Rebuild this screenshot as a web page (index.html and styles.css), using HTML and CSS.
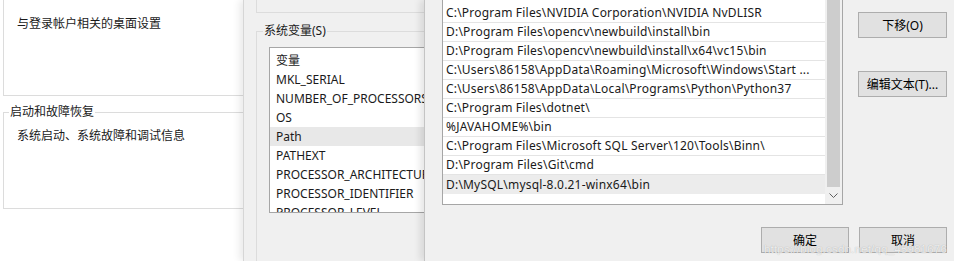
FILE: index.html
```html
<!DOCTYPE html>
<html lang="zh-CN">
<head>
    <meta charset="UTF-8">
    <title>编辑环境变量</title>
    <link rel="stylesheet" href="styles.css">
</head>
<body>

    <div class="desktop">

        <!-- 系统属性 / 高级 -->
        <section class="win win-advanced">
            <div class="group group-profile">
                <p class="group-text">与登录帐户相关的桌面设置</p>
            </div>
            <fieldset class="group group-startup">
                <legend>启动和故障恢复</legend>
                <p class="group-text">系统启动、系统故障和调试信息</p>
            </fieldset>
        </section>

        <!-- 环境变量 -->
        <section class="win win-env">
            <div class="env-user"></div>
            <fieldset class="env-system">
                <legend>系统变量(S)</legend>
                <div class="listbox var-list">
                    <div class="var-row">变量</div>
                    <div class="var-row">MKL_SERIAL</div>
                    <div class="var-row">NUMBER_OF_PROCESSORS</div>
                    <div class="var-row">OS</div>
                    <div class="var-row selected">Path</div>
                    <div class="var-row">PATHEXT</div>
                    <div class="var-row">PROCESSOR_ARCHITECTURE</div>
                    <div class="var-row">PROCESSOR_IDENTIFIER</div>
                    <div class="var-row">PROCESSOR_LEVEL</div>
                </div>
            </fieldset>
        </section>

        <!-- 编辑环境变量 -->
        <section class="win win-edit">
            <div class="edit-main">
                <div class="listbox path-list">
                    <ul class="path-items">
                        <li>C:\Program Files\NVIDIA Corporation\NVIDIA NvDLISR</li>
                        <li>D:\Program Files\opencv\newbuild\install\bin</li>
                        <li>D:\Program Files\opencv\newbuild\install\x64\vc15\bin</li>
                        <li>C:\Users\86158\AppData\Roaming\Microsoft\Windows\Start ...</li>
                        <li>C:\Users\86158\AppData\Local\Programs\Python\Python37</li>
                        <li>C:\Program Files\dotnet\</li>
                        <li>%JAVAHOME%\bin</li>
                        <li>C:\Program Files\Microsoft SQL Server\120\Tools\Binn\</li>
                        <li>D:\Program Files\Git\cmd</li>
                        <li class="selected">D:\MySQL\mysql-8.0.21-winx64\bin</li>
                    </ul>
                    <div class="scrollbar">
                        <div class="scroll-thumb"></div>
                        <div class="scroll-arrow">
                            <svg width="9" height="6" viewBox="0 0 9 6">
                                <polyline points="0.5,0.5 4.5,4.5 8.5,0.5" fill="none" stroke="#606060" stroke-width="1"/>
                            </svg>
                        </div>
                    </div>
                </div>
                <div class="side-buttons">
                    <button class="btn">下移(O)</button>
                    <button class="btn btn-edit">编辑文本(T)...</button>
                </div>
            </div>
            <div class="dialog-buttons">
                <button class="btn">确定</button>
                <button class="btn">取消</button>
            </div>
            <span class="watermark">https://blog.csdn.net/qq_45981676</span>
        </section>

    </div>

</body>
</html>
```

FILE: styles.css
```css
/* General */
body {
    margin: 0;
    font-family: "Noto Sans", "Noto Sans CJK SC", sans-serif;
    font-size: 12px;
    color: #1a1a1a;
    background: #f0f0f0;
}

.desktop {
    display: flex;
    height: 261px;
    overflow: hidden;
}

/* Windows */
.win {
    position: relative;
    height: 261px;
    box-sizing: border-box;
    overflow: hidden;
}

.win-advanced {
    width: 243px;
    flex-shrink: 0;
    padding-left: 3px;
    background: #fff;
}

.win-env {
    width: 181px;
    flex-shrink: 0;
    background: #f0f0f0;
    border-left: 1px solid #d6d6d6;
    box-shadow: -4px 0 7px rgba(0, 0, 0, 0.08);
}

.win-edit {
    flex: 1;
    background: #f0f0f0;
    border-left: 1px solid #c4c4c4;
    box-shadow: -4px 0 7px rgba(0, 0, 0, 0.1);
}

/* Group boxes (advanced tab) */
.group {
    width: 300px;
    box-sizing: border-box;
    border: 1px solid #dcdcdc;
    border-right: none;
}

.group-profile {
    height: 96px;
    border-top: none;
}

.group-startup {
    margin: 8px 0 0;
    padding: 0 0 64px;
}

.group legend,
.env-system legend {
    margin-left: 5px;
    padding: 0 1px;
    line-height: 16px;
}

.group-text {
    margin: 0;
    padding: 16px 0 0 13px;
    line-height: 16px;
}

.group-startup .group-text {
    padding: 8px 0 0 13px;
}

/* Environment variables */
.env-user {
    width: 300px;
    height: 13px;
    margin-left: 12px;
    box-sizing: border-box;
    border-left: 1px solid #dcdcdc;
    border-bottom: 1px solid #dcdcdc;
}

.env-system {
    width: 300px;
    margin: 10px 0 0 12px;
    padding: 0 0 0 12px;
    border: 1px solid #dcdcdc;
    border-right: none;
    height: 260px;
}

.env-system legend {
    margin-left: -6px;
}

.listbox {
    background: #fff;
    border: 1px solid #a6a6a6;
    box-sizing: border-box;
}

.var-list {
    width: 200px;
    height: 166px;
    margin-top: 8px;
    padding-top: 3px;
    overflow: hidden;
}

.var-row {
    padding-left: 6px;
    line-height: 19px;
    height: 19px;
    white-space: nowrap;
}

.var-row.selected {
    background: #e8e8e8;
}

/* Edit variable dialog */
.edit-main {
    display: flex;
    height: 205px;
}

.path-list {
    display: flex;
    width: 401px;
    height: 205px;
    margin-left: 17px;
    border-top: none;
}

.path-items {
    flex: 1;
    list-style: none;
    margin: 0;
    padding: 4px 0 0;
    letter-spacing: 0.2px;
}

.path-items li {
    height: 18px;
    line-height: 18px;
    padding-left: 3px;
    border-bottom: 1px solid #e4e4e4;
    white-space: nowrap;
    overflow: hidden;
}

.path-items li.selected {
    border-bottom: none;
    height: 19px;
    line-height: 19px;
    background: #ececec;
}

.scrollbar {
    width: 17px;
    display: flex;
    flex-direction: column;
    background: #f0f0f0;
}

.scroll-thumb {
    flex: 1;
    margin: 0 2px;
    background: #cdcdcd;
}

.scroll-arrow {
    height: 17px;
    display: flex;
    align-items: center;
    justify-content: center;
}

.side-buttons {
    display: flex;
    flex-direction: column;
    gap: 33px;
    margin-left: 15px;
    padding-top: 12px;
}

/* Buttons */
.btn {
    width: 88px;
    height: 26px;
    padding: 0;
    font-family: inherit;
    font-size: 12px;
    color: #000;
    background: #e1e1e1;
    border: 1px solid #adadad;
}

.side-buttons .btn {
    width: 89px;
}

.dialog-buttons {
    display: flex;
    justify-content: flex-end;
    gap: 10px;
    margin-top: 22px;
    padding-right: 7px;
}

/* CSDN watermark over the buttons */
.watermark {
    position: absolute;
    right: 7px;
    bottom: 6px;
    font-family: "Liberation Sans", sans-serif;
    font-size: 11.5px;
    color: rgba(255, 255, 255, 0.8);
    text-shadow: 0 0 1px rgba(0, 0, 0, 0.3);
    letter-spacing: 0.2px;
}
```
